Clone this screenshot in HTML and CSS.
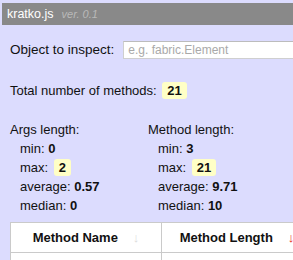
FILE: index.html
```
<!DOCTYPE html>
<html>
<head>
    <link rel="stylesheet" href="styles.css">
    <title>kratko.js</title>
</head>
<body>
    <div class="header">
        <span class="title">kratko.js</span>
        <span class="version">ver. 0.1</span>
    </div>

    <div class="content">
        <div class="inspect">
            <label for="object">Object to inspect:</label>
            <input id="object" placeholder="e.g. fabric.Element" />
        </div>

        <p class="total">Total number of methods: <span class="badge">21</span></p>

        <div class="stats">
            <div class="stats-col">
                <div class="stats-title">Args length:</div>
                <div class="stats-line">min: <b>0</b></div>
                <div class="stats-line">max: <span class="badge">2</span></div>
                <div class="stats-line">average: <b>0.57</b></div>
                <div class="stats-line">median: <b>0</b></div>
            </div>
            <div class="stats-col">
                <div class="stats-title">Method length:</div>
                <div class="stats-line">min: <b>3</b></div>
                <div class="stats-line">max: <span class="badge">21</span></div>
                <div class="stats-line">average: <b>9.71</b></div>
                <div class="stats-line">median: <b>10</b></div>
            </div>
        </div>

        <table class="methods">
            <thead>
                <tr>
                    <th><span>Method Name</span><span class="arrow">&darr;</span></th>
                    <th><span>Method Length</span><span class="arrow active">&darr;</span></th>
                </tr>
            </thead>
            <tbody>
                <tr>
                    <td>&nbsp;</td>
                    <td>&nbsp;</td>
                </tr>
            </tbody>
        </table>
    </div>
</body>
</html>
```

FILE: styles.css
```
html {
    overflow: hidden;
}

body {
    margin: 0;
    width: 293px;
    height: 260px;
    overflow: hidden;
    background: #dcdcfe;
    font-family: "Liberation Sans", Arial, sans-serif;
    font-size: 13px;
    color: #111;
}

.header {
    margin: 3px 0 0 2px;
    height: 22px;
    width: 400px;
    background: #898989;
    display: flex;
    align-items: center;
    padding-left: 5px;
}

.title {
    color: #fff;
    font-size: 12.5px;
}

.version {
    color: #b9b9b9;
    font-size: 11px;
    font-style: italic;
    margin-left: 8px;
}

.content {
    padding-left: 10px;
}

.inspect {
    margin-top: 16px;
    height: 17px;
    display: flex;
    align-items: center;
    white-space: nowrap;
}

.inspect label {
    font-size: 13.5px;
}

.inspect input {
    margin: 0 0 0 9px;
    box-sizing: border-box;
    height: 18px;
    width: 220px;
    flex: none;
    border: 1px solid #cfcfcf;
    border-top-color: #bcbcbc;
    padding: 0 4px;
    font-family: "Liberation Sans", Arial, sans-serif;
    font-size: 12px;
    background: #fff;
}

.inspect input::placeholder {
    color: #a9a9a9;
}

.total {
    margin: 23px 0 0;
    line-height: 19px;
}

.badge {
    display: inline-block;
    background: #ffffc6;
    border-radius: 3px;
    padding: 0 5px;
    line-height: 17px;
    font-weight: bold;
    margin-left: 2px;
}

.stats {
    margin-top: 20px;
    display: flex;
}

.stats-col {
    width: 138px;
    line-height: 19px;
}

.stats-line {
    padding-left: 10px;
}

.methods {
    margin-top: 7px;
    border-collapse: collapse;
    background: #fff;
    width: 303px;
    table-layout: fixed;
}

.methods th,
.methods td {
    border: 1px solid #cacaca;
}

.methods th {
    height: 29px;
    text-align: center;
    font-weight: bold;
    padding: 0;
    white-space: nowrap;
}

.methods td {
    height: 20px;
}

.arrow {
    color: #dcdcdc;
    margin-left: 15px;
    font-weight: normal;
}

.arrow.active {
    color: #e8321e;
}
```
